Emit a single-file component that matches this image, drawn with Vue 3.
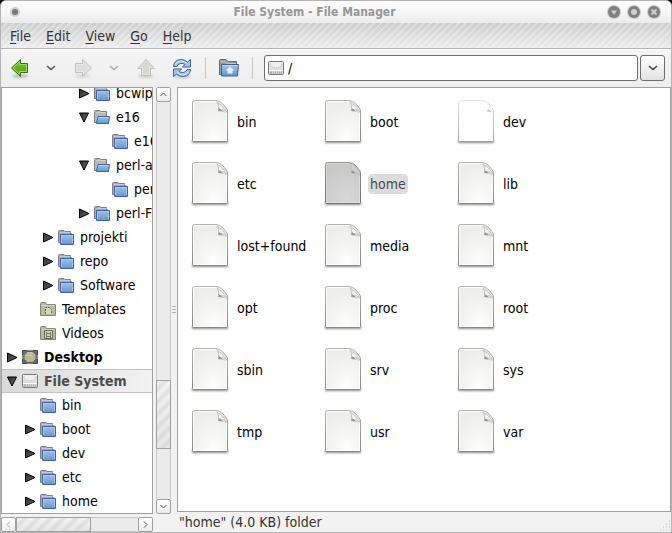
<script setup>
import { ref } from 'vue'

const menus = ['File', 'Edit', 'View', 'Go', 'Help']
const path = ref('/')
const tree = [
  { name: 'bcwip', level: 4, state: 'closed', icon: 'folder' },
  { name: 'e16', level: 4, state: 'open', icon: 'folder-open' },
  { name: 'e16', level: 5, icon: 'folder' },
  { name: 'perl-a', level: 4, state: 'open', icon: 'folder-open' },
  { name: 'perl', level: 5, icon: 'folder' },
  { name: 'perl-F', level: 4, state: 'closed', icon: 'folder' },
  { name: 'projekti', level: 2, state: 'closed', icon: 'folder' },
  { name: 'repo', level: 2, state: 'closed', icon: 'folder' },
  { name: 'Software', level: 2, state: 'closed', icon: 'folder' },
  { name: 'Templates', level: 1, icon: 'templates' },
  { name: 'Videos', level: 1, icon: 'videos' },
  { name: 'Desktop', level: 0, state: 'closed', icon: 'desktop', bold: true },
  { name: 'File System', level: 0, state: 'open', icon: 'drive', bold: true, selected: true },
  { name: 'bin', level: 1, icon: 'folder' },
  { name: 'boot', level: 1, state: 'closed', icon: 'folder' },
  { name: 'dev', level: 1, state: 'closed', icon: 'folder' },
  { name: 'etc', level: 1, state: 'closed', icon: 'folder' },
  { name: 'home', level: 1, state: 'closed', icon: 'folder' },
]
const files = ['bin', 'boot', 'dev', 'etc', 'home', 'lib', 'lost+found', 'media', 'mnt', 'opt', 'proc', 'root', 'sbin', 'srv', 'sys', 'tmp', 'usr', 'var']
const selected = ref('home')
const pageKind = (name) => (name === selected.value ? 'selected' : name === 'dev' ? 'light' : 'normal')
</script>

<template>
  <div class="window">
    <svg class="defs" aria-hidden="true">
      <defs>
        <linearGradient id="blue" x1="0" y1="0" x2="0" y2="1">
          <stop offset="0" stop-color="#a4c1e4" />
          <stop offset="1" stop-color="#6496d2" />
        </linearGradient>
        <linearGradient id="green" x1="0" y1="0" x2="0" y2="1">
          <stop offset="0" stop-color="#7fc83a" />
          <stop offset="1" stop-color="#4a9c0c" />
        </linearGradient>
        <linearGradient id="metal" x1="0" y1="0" x2="0" y2="1">
          <stop offset="0" stop-color="#f4f4f4" />
          <stop offset="1" stop-color="#cfcfcf" />
        </linearGradient>
        <linearGradient id="expander" x1="0" y1="0" x2="1" y2="1">
          <stop offset="0" stop-color="#2c2c2c" />
          <stop offset="1" stop-color="#6a6a6a" />
        </linearGradient>
        <radialGradient id="page-normal" cx="0.6" cy="0.88" r="0.8">
          <stop offset="0" stop-color="#fefefe" />
          <stop offset="0.4" stop-color="#f6f6f5" />
          <stop offset="1" stop-color="#edeeec" />
        </radialGradient>
        <radialGradient id="page-light" cx="0.6" cy="0.88" r="0.8">
          <stop offset="0" stop-color="#ffffff" />
          <stop offset="1" stop-color="#fefefe" />
        </radialGradient>
        <radialGradient id="page-selected" cx="0.6" cy="0.88" r="0.8">
          <stop offset="0" stop-color="#d8d8d8" />
          <stop offset="0.5" stop-color="#d0d0d0" />
          <stop offset="1" stop-color="#c8c9c7" />
        </radialGradient>
        <linearGradient id="edge-normal" x1="0" y1="0" x2="0" y2="1">
          <stop offset="0" stop-color="#b2b3ae" />
          <stop offset="1" stop-color="#868782" />
        </linearGradient>
        <linearGradient id="edge-light" x1="0" y1="0" x2="0" y2="1">
          <stop offset="0" stop-color="#e4e5df" />
          <stop offset="1" stop-color="#a3a4a0" />
        </linearGradient>
        <linearGradient id="edge-selected" x1="0" y1="0" x2="0" y2="1">
          <stop offset="0" stop-color="#92938f" />
          <stop offset="1" stop-color="#71726e" />
        </linearGradient>
        <filter id="soft" x="-20%" y="-100%" width="140%" height="300%">
          <feGaussianBlur stdDeviation="1" />
        </filter>
        <symbol id="folder" viewBox="0 0 16 16">
          <path d="M.5 13.500V2.500q0-1 1-1h4.500l1 1h5.500v2h1v9z" fill="#a9a9a6" stroke="#808080" />
          <path d="M1.500 3.500h11" stroke="#c9c9c6" />
          <path d="M2.500 5.500h13v9.500q0 .5-.5.5H3q-.5 0-.5-.5z" fill="url(#blue)" stroke="#3465a4" />
          <path d="M3.500 14V6.500h11V14" fill="none" stroke="#a9c5e8" />
        </symbol>
        <symbol id="folder-open" viewBox="0 0 16 16">
          <path d="M.5 13.500V2.500q0-1 1-1h4.500l1 1h5.500v5h1v6z" fill="#b8b8b5" stroke="#808080" />
          <path d="M1.500 3.500h10" stroke="#d0d0cd" />
          <path d="M4 7.500h11.500l-1 7H2.500z" fill="url(#blue)" stroke="#3465a4" stroke-linejoin="round" />
          <path d="M4.500 8.500h10" stroke="#bdd2ec" />
        </symbol>
        <symbol id="templates" viewBox="0 0 16 16">
          <path d="M.5 14.500v-12q0-1 1-1h4l1 2h8.500q.5 0 .5.5v10.500z" fill="#b9baa5" stroke="#84866f" />
          <path d="M1.500 4.500h13" stroke="#d6d7c6" />
          <path d="M5.500 13V6.500h4l2 2V13" fill="#d2d3c3" stroke="#66684f" stroke-dasharray="2 1" />
        </symbol>
        <symbol id="videos" viewBox="0 0 16 16">
          <path d="M.5 14.500v-12q0-1 1-1h4l1 2h8.500q.5 0 .5.5v10.500z" fill="#b9baa5" stroke="#84866f" />
          <path d="M1.500 4.500h13" stroke="#d6d7c6" />
          <path d="M4.500 5.500h8v8h-8z" fill="#d2d3c3" stroke="#66684f" />
          <path d="M6.500 7v6M10.500 7v6M7 8.500h3M7 11.500h3" fill="none" stroke="#77795f" />
        </symbol>
        <symbol id="desktop" viewBox="0 0 16 16">
          <path d="M.5 1.500h15v13H.5z" fill="#5f6c8a" stroke="#3c4660" />
          <path d="M5 1h6v2H5zM5 13h6v2H5zM0 6h2v4H0zM14 6h2v4h-2z" fill="#8d8f7c" />
          <path d="M5 2.500h6q1 2 3 3v5q-2 1-3 3H5q-1-2-3-3v-5q2-1 3-3z" fill="#b9b99a" stroke="#5e604a" />
          <path d="M5.500 4h5M4 6.500h6" stroke="#cacab0" />
        </symbol>
        <symbol id="drive" viewBox="0 0 16 16">
          <rect x=".5" y="1.500" width="15" height="13" rx="1" fill="url(#metal)" stroke="#777" />
          <path d="M2 3q0 5 6 5t6-5" fill="#efefef" stroke="#cccccc" />
          <path d="M1 10.500h14" stroke="#fff" />
          <path d="M2 12.500h2M5 12.500h1M7 12.500h1M9 12.500h1M11 12.500h1M13 12.500h1" stroke="#aaa" stroke-width="2" />
        </symbol>
        <symbol id="chevron" viewBox="0 0 10 6">
          <path d="M1 1l4 3.500L9 1" fill="none" stroke="currentColor" stroke-width="1.600" />
        </symbol>
      </defs>
    </svg>

    <header class="titlebar">
      <button class="menu-dot" aria-label="Window menu"></button>
      <h1>File System - File Manager</h1>
      <div class="controls">
        <button aria-label="Minimize"><svg viewBox="0 0 14 14"><circle cx="7" cy="7" r="6" /><path d="M4 5.500h6L7 10z" class="glyph-fill" /></svg></button>
        <button aria-label="Maximize"><svg viewBox="0 0 14 14"><circle cx="7" cy="7" r="6" /><circle cx="7" cy="7" r="3" class="glyph-fill" /></svg></button>
        <button aria-label="Close"><svg viewBox="0 0 14 14"><circle cx="7" cy="7" r="6" /><path d="M4.500 4.500l5 5m0-5l-5 5" class="glyph-line" /></svg></button>
      </div>
    </header>

    <nav class="menubar">
      <button v-for="m in menus" :key="m"><u>{{ m[0] }}</u>{{ m.slice(1) }}</button>
    </nav>

    <div class="toolbar">
      <button class="tool" aria-label="Back">
        <svg viewBox="0 0 24 24">
          <ellipse cx="12" cy="20" rx="8" ry="2" fill="#000" opacity=".2" filter="url(#soft)" />
          <path d="M3.500 12L12.500 3.500v4h7v9h-7v4z" fill="url(#green)" stroke="#3a7304" stroke-linejoin="round" />
          <path d="M5 12l6.500-6.200v2.700h7v7h-7v2.700z" fill="none" stroke="#9fdc66" />
        </svg>
      </button>
      <button class="drop" aria-label="Back history"><svg viewBox="0 0 10 6"><use href="#chevron" /></svg></button>
      <button class="tool" aria-label="Forward" disabled>
        <svg viewBox="0 0 24 24">
          <ellipse cx="12" cy="20" rx="8" ry="2" fill="#000" opacity=".08" filter="url(#soft)" />
          <path d="M20.500 12L11.500 3.500v4h-7v9h7v4z" fill="#dddedb" stroke="#bfc1bc" stroke-linejoin="round" />
          <path d="M19 12l-6.500-6.200v2.700h-7v7h7v2.700z" fill="none" stroke="#e8e9e7" />
        </svg>
      </button>
      <button class="drop" aria-label="Forward history" disabled><svg viewBox="0 0 10 6"><use href="#chevron" /></svg></button>
      <button class="tool up" aria-label="Up" disabled>
        <svg viewBox="0 0 24 24">
          <ellipse cx="12" cy="20" rx="8" ry="2" fill="#000" opacity=".12" filter="url(#soft)" />
          <path d="M12 3.500l8.500 9h-4v7h-9v-7h-4z" fill="#d6d8d4" stroke="#bfc1bc" stroke-linejoin="round" />
          <path d="M12 5l6.200 6.500h-2.700v7h-7v-7H5.800z" fill="none" stroke="#e2e3e0" />
        </svg>
      </button>
      <button class="tool" aria-label="Reload">
        <svg viewBox="0 0 24 24">
          <ellipse cx="12" cy="20" rx="9" ry="3" fill="#000" opacity=".12" filter="url(#soft)" />
          <g id="reload-half" fill="#a7c4e8" stroke="#3465a4" stroke-linejoin="round">
            <path d="M3.500 10.500Q4 4 10.500 3.500q4-.2 7 2.500l3-2.500v7.500h-8l2.500-2.500q-2-1.500-4.500-1-3 .6-3.500 3z" />
            <path d="M5.500 8.500Q7 5.500 11 5q3.500 0 6 2.500" fill="none" stroke="#d6e4f5" />
          </g>
          <use href="#reload-half" transform="rotate(180 12 12)" />
        </svg>
      </button>
      <span class="separator"></span>
      <button class="tool" aria-label="Home">
        <svg viewBox="0 0 24 24">
          <path d="M2.500 18.500V4.500q0-1 1-1H9l2 2h8.500v13z" fill="#9b9b98" stroke="#6c6c6c" />
          <path d="M3.500 5.500h5l1 2H19" fill="none" stroke="#c3c3c0" />
          <path d="M4.500 8.500h17l-1 11.500h-16z" fill="url(#blue)" stroke="#3465a4" stroke-linejoin="round" />
          <path d="M5.500 9.500h15" stroke="#c6d9ef" />
          <path d="M13 10.500l4.500 4h-2v3h-5v-3h-2z" fill="#e4edf8" />
        </svg>
      </button>
      <span class="separator"></span>
      <label class="location">
        <svg viewBox="0 0 16 16"><use href="#drive" /></svg>
        <input v-model="path" type="text" aria-label="Location" />
      </label>
      <button class="history" aria-label="Location history"><svg viewBox="0 0 10 6"><use href="#chevron" /></svg></button>
    </div>

    <main class="body">
      <aside class="side">
        <ul class="tree">
          <li v-for="(n, i) in tree" :key="i" :class="{ bold: n.bold, active: n.selected }" :style="{ '--level': n.level }">
            <span class="expander">
              <svg v-if="n.state" viewBox="0 0 11 11">
                <path v-if="n.state === 'closed'" d="M.5 1v9l9.500-4.500z" />
                <path v-else d="M.5 1h9L5 10z" />
              </svg>
            </span>
            <svg class="node" viewBox="0 0 16 16"><use :href="'#' + n.icon" /></svg>
            <span class="name">{{ n.name }}</span>
          </li>
        </ul>
        <div class="vscroll">
          <button aria-label="Scroll up"><svg viewBox="0 0 7 5"><path d="M.5 4l3-3 3 3" /></svg></button>
          <div class="track"><div class="thumb"></div></div>
          <button aria-label="Scroll down"><svg viewBox="0 0 7 5"><path d="M.5 1l3 3 3-3" /></svg></button>
        </div>
        <div class="hscroll">
          <button aria-label="Scroll left" disabled><svg viewBox="0 0 5 7"><path d="M4 .5l-3 3 3 3" /></svg></button>
          <div class="track"><div class="thumb"></div></div>
          <button aria-label="Scroll right"><svg viewBox="0 0 5 7"><path d="M1 .5l3 3-3 3" /></svg></button>
        </div>
      </aside>
      <div class="splitter"><i></i><i></i><i></i></div>
      <section class="content">
        <div class="files">
          <button v-for="f in files" :key="f" class="file" :class="{ chosen: f === selected }" @click="selected = f">
            <svg viewBox="0 0 48 48">
              <rect x="6" y="42" width="36" height="3" fill="#000" opacity=".45" filter="url(#soft)" />
              <path d="M8.500 2.500H30q4 0 7 3.500t4.500 6v30.500q0 1-1 1h-33q-1 0-1-1V4.500q0-2 2-2z" :fill="`url(#page-${pageKind(f)})`" :stroke="`url(#edge-${pageKind(f)})`" />
              <path d="M8.500 3.500H30M7.500 4.500v38h33V15" fill="none" stroke="#fff" :opacity="f === selected ? 0.3 : 0.9" />
              <path v-if="pageKind(f) === 'light'" d="M34 13l6 1.500-3-3z" fill="#bcbdb8" />
              <template v-else>
                <path d="M31 4q2.500 3 1.500 7.500 5.500-.5 8.500 2.500Q37 7 31 4z" :fill="f === selected ? '#d2d2d1' : '#f2f2f1'" stroke="#c3c4c0" />
                <path d="M32 13q1-1 .8-3 3 3 8.200 5-4-2-9-2z" fill="#92938f" />
              </template>
            </svg>
            <span>{{ f }}</span>
          </button>
        </div>
        <footer class="status">
          <span>"{{ selected }}" (4.0 KB) folder</span>
          <svg class="grip" viewBox="0 0 12 12"><path d="M10 1h1M7 4h1m2 0h1M4 7h1m2 0h1m2 0h1M1 10h1m2 0h1m2 0h1m2 0h1" /></svg>
        </footer>
      </section>
    </main>
  </div>
</template>

<style>
body {
  background: #000;
}
</style>

<style scoped>
* {
  box-sizing: border-box;
}
.window {
  display: flex;
  flex-direction: column;
  height: 100vh;
  border: 1px solid #b4b4b4;
  border-radius: 6px 6px 0 0;
  background: #f2f2f2;
  color: #333;
  font: 14px/18px "DejaVu Sans Condensed", "DejaVu Sans", sans-serif;
  overflow: hidden;
}
.defs {
  position: absolute;
  width: 0;
  height: 0;
}
svg {
  display: block;
  flex: none;
}
button {
  display: block;
  flex: none;
  margin: 0;
  padding: 0;
  border: 0;
  background: none;
  color: inherit;
  font: inherit;
}
.titlebar {
  display: grid;
  grid-template-columns: 20px 1fr 62px;
  align-items: center;
  height: 22px;
  flex: none;
  padding: 0 10px 0 9px;
  background: linear-gradient(#fff, #ececec);
}
.titlebar h1 {
  margin: 0;
  text-align: center;
  font-size: 12px;
  line-height: 20px;
  color: #969696;
}
.menu-dot {
  width: 10px;
  height: 10px;
  border: 2px solid #d0d0d0;
  border-radius: 50%;
  background: #777;
}
.controls {
  display: flex;
  gap: 6px;
  justify-content: flex-end;
}
.controls svg {
  width: 14px;
  height: 14px;
  border-radius: 50%;
  background: #c9c9c9;
}
.controls circle {
  fill: #808080;
}
.controls .glyph-fill {
  fill: #cfcfcf;
}
.controls .glyph-line {
  stroke: #cfcfcf;
  stroke-width: 2;
}
.menubar {
  display: flex;
  align-items: center;
  gap: 15px;
  height: 26px;
  flex: none;
  padding: 0 9px;
  border-bottom: 1px solid #b4b4b4;
  background:
    repeating-linear-gradient(135deg, rgba(255, 255, 255, 0) 0 3px, rgba(255, 255, 255, 0.3) 3px 5px),
    linear-gradient(#cdcdcd, #ececec);
}
.menubar u {
  text-underline-offset: 2px;
}
.toolbar {
  display: flex;
  align-items: center;
  height: 38px;
  flex: none;
  padding: 0 6px 2px 7px;
  border-top: 1px solid #fff;
  background: linear-gradient(#f4f4f4, #eeeeee);
}
.tool svg {
  width: 24px;
  height: 24px;
}
.drop {
  margin: 0 15px 0 14px;
  color: #555;
}
.drop:disabled {
  color: #aaa;
}
.drop svg,
.history svg {
  width: 10px;
  height: 6px;
}
.up {
  margin-right: 12px;
}
.separator {
  width: 1px;
  height: 22px;
  margin: 0 11px;
  background: #c8c8c8;
}
.location {
  display: flex;
  align-items: center;
  flex: 1;
  min-width: 0;
  gap: 4px;
  height: 26px;
  padding: 0 3px;
  border: 1px solid #6e6e6e;
  border-radius: 3px;
  background: #fff;
}
.location svg {
  width: 16px;
  height: 16px;
}
.location input {
  flex: 1;
  min-width: 0;
  padding: 0;
  border: 0;
  outline: 0;
  background: none;
  color: #000;
  font: inherit;
}
.history {
  display: grid;
  place-items: center;
  width: 25px;
  height: 26px;
  margin-left: 2px;
  border: 1px solid #6e6e6e;
  border-radius: 3px;
  background: linear-gradient(#fff, #e2e2e2);
  color: #444;
}
.body {
  display: flex;
  flex: 1;
  min-height: 0;
}
.side {
  display: grid;
  grid-template: 1fr 15px / 152px 15px;
  gap: 3px;
  flex: none;
}
.tree {
  display: flex;
  flex-direction: column;
  justify-content: flex-end;
  min-height: 0;
  margin: 0;
  padding: 0;
  border: 1px solid #a0a0a0;
  background: #fff;
  color: #000;
  list-style: none;
  overflow: hidden;
}
.tree li {
  display: flex;
  align-items: center;
  flex: none;
  height: 24px;
  padding-left: calc(5px + var(--level) * 18px);
  white-space: nowrap;
}
.tree .bold {
  font-weight: bold;
}
.tree .active {
  border-top: 1px solid #c0c0c0;
  border-bottom: 1px solid #c0c0c0;
  background: linear-gradient(90deg, #d9d9d9, #f2f2f2);
  color: #4c4c4c;
}
.expander {
  flex: none;
  width: 11px;
  margin-right: 4px;
}
.expander svg {
  width: 11px;
  height: 11px;
  fill: url(#expander);
  stroke: #000;
}
.node {
  width: 16px;
  height: 16px;
  margin-right: 6px;
}
.vscroll,
.hscroll {
  display: flex;
}
.vscroll {
  flex-direction: column;
}
.vscroll button,
.hscroll button {
  display: grid;
  place-items: center;
  flex: none;
  width: 15px;
  height: 15px;
  border: 1px solid #a0a0a0;
  border-radius: 2px;
  background: linear-gradient(#fff, #ebebeb);
}
.vscroll path,
.hscroll path {
  fill: none;
  stroke: #555;
}
.vscroll svg {
  width: 7px;
  height: 5px;
}
.hscroll svg {
  width: 5px;
  height: 7px;
}
.hscroll button:disabled path {
  stroke: #aaa;
}
.track {
  display: flex;
  flex: 1;
  background: #ebebeb;
}
.vscroll .track {
  flex-direction: column;
  border: solid #c8c8c8;
  border-width: 0 1px;
}
.vscroll .track::before {
  content: "";
  flex: 281;
}
.vscroll .track::after {
  content: "";
  flex: 51;
}
.hscroll .track {
  border: solid #c8c8c8;
  border-width: 1px 0;
}
.hscroll .track::after {
  content: "";
  flex: 48;
}
.thumb {
  border: 1px solid #a0a0a0;
  background:
    repeating-linear-gradient(135deg, rgba(190, 190, 190, 0) 0 3px, rgba(190, 190, 190, 0.3) 5px 7px, rgba(190, 190, 190, 0) 9px),
    linear-gradient(#f2f2f2, #e6e6e6);
}
.vscroll .thumb {
  flex: 67;
  margin: 0 -1px;
}
.hscroll .thumb {
  flex: 75;
  margin: -1px 0;
}
.splitter {
  display: flex;
  flex-direction: column;
  align-items: center;
  justify-content: center;
  gap: 2px;
  width: 6px;
  flex: none;
}
.splitter i {
  width: 4px;
  height: 1px;
  background: #b0b0b0;
}
.content {
  display: flex;
  flex-direction: column;
  flex: 1;
  min-width: 0;
}
.files {
  display: grid;
  grid-template-columns: repeat(auto-fill, 133px);
  grid-auto-rows: 62px;
  justify-content: start;
  flex: 1;
  min-height: 0;
  padding: 3px 85px 0 8px;
  border: 1px solid #a0a0a0;
  background: #fff;
  overflow: hidden;
}
.file {
  display: flex;
  align-items: center;
  gap: 1px;
  color: #000;
  white-space: nowrap;
}
.file svg {
  width: 48px;
  height: 48px;
}
.file span {
  padding: 1px 2px;
  border-radius: 4px;
}
.chosen span {
  background: #dcdcdc;
  color: #4c4c4c;
}
.status {
  display: flex;
  align-items: center;
  justify-content: space-between;
  flex: none;
  height: 20px;
  padding-left: 2px;
}
.grip {
  width: 12px;
  height: 12px;
  align-self: flex-end;
  stroke: #bbb;
}
</style>
